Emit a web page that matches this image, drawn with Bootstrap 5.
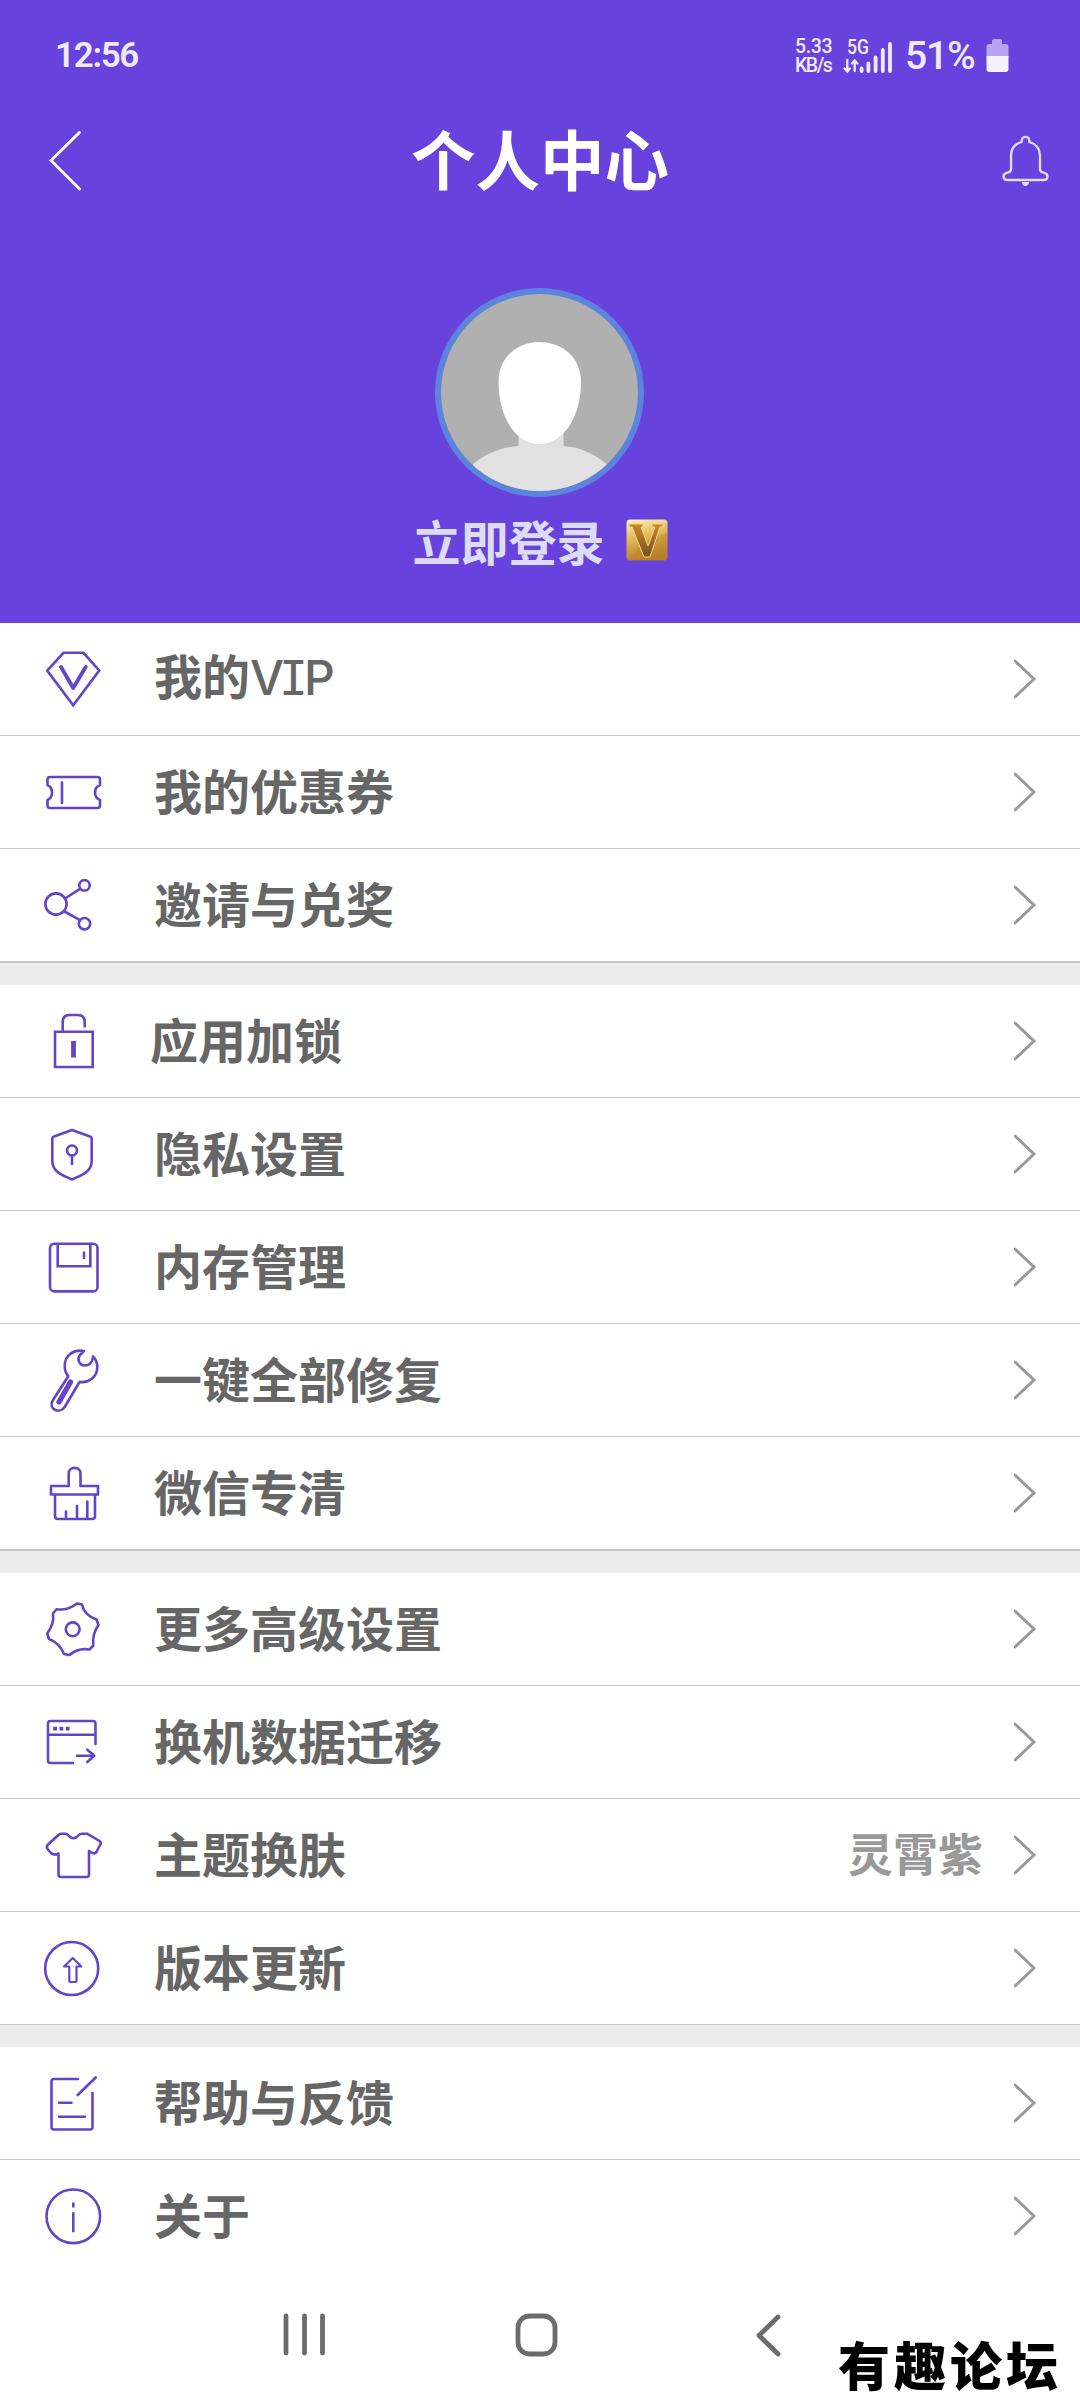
<!DOCTYPE html>
<html lang="zh-CN">
<head>
<meta charset="utf-8">
<meta name="viewport" content="width=device-width, initial-scale=1">
<title>个人中心</title>
<link href="https://cdn.jsdelivr.net/npm/bootstrap@5.3.0/dist/css/bootstrap.min.css" rel="stylesheet">
<style>
body{font-family:"Noto Sans CJK SC",sans-serif;background:#fff;color:#666;width:1080px;height:2400px;overflow:hidden}
svg{display:block;flex:none}
.hero{background:#6742dd;height:623px}
.status-bar{height:110px;padding:0 71px 0 55px;color:#f1eaff;font-family:Roboto,sans-serif}
.clock{font-size:35px;font-weight:600;letter-spacing:-1.3px;line-height:1;padding-top:38px}
.net{font-size:19.5px;font-weight:500;line-height:19px;width:48px;padding-top:37px;letter-spacing:-.4px}
.net-unit{letter-spacing:-1.5px}
.pct{font-size:39px;font-weight:500;line-height:1;padding-top:37px;width:81px;margin-left:12px;letter-spacing:-1.2px}
.title-bar{height:100px}
.page-title{font-size:64.5px;font-weight:700;line-height:94px;margin-bottom:6px;color:#fff}
.avatar{margin-top:78px;padding-right:1px}
.login{font-size:48px;font-weight:700;line-height:60px;color:#dcdcf8;margin-top:13px}
.vip-badge{margin-left:21px}
.item{height:113px;border:0;border-bottom:1px solid #c8c8c8!important;border-radius:0;padding:0;background:#fff;color:#666}
.item-name{font-size:48px;font-weight:700;line-height:106px;padding-left:44px;margin-bottom:6px}
.item-name.shifted{padding-left:40px}
.latin{font-family:Inter,sans-serif;font-weight:500;font-size:48px;letter-spacing:-2px}
.latin-i{font-family:"DejaVu Sans Mono",monospace;font-weight:400;font-size:48px;letter-spacing:-4px;margin-left:-3px}
.item-note{font-size:45px;font-weight:700;line-height:106px;margin-bottom:4px;color:#999;margin-right:31px}
.ico{fill:none;stroke:#6345c8;stroke-width:2.6;stroke-linejoin:round;stroke-linecap:round}
.chev{fill:none;stroke:#999;stroke-width:3;stroke-linecap:round;margin-right:42px}
.gap-band{height:22px;background:#ebebeb}
.gap-band.ruled{height:23px;border-top:1px solid #c8c8c8}
.last-group .item:last-child{border-bottom-color:#fff!important}
.sys-nav{height:127px}
.stamp{right:18px;bottom:4px;font-size:52px;font-weight:900;line-height:64px;letter-spacing:4px;color:#000}
</style>
<script src="https://cdn.jsdelivr.net/npm/bootstrap@5.3.0/dist/js/bootstrap.bundle.min.js"></script>
</head>
<body class="position-relative">
<header class="hero d-flex flex-column">
  <div class="status-bar d-flex justify-content-between align-items-start">
    <div class="clock">12:56</div>
    <div class="d-flex align-items-start">
      <div class="net">5.33<br><span class="net-unit">KB/s</span></div>
      <svg width="50" height="80" viewBox="843 0 50 80" fill="none" stroke="#f1eaff" stroke-linecap="round">
        <text x="847" y="53.5" font-size="20" font-weight="500" fill="#f1eaff" stroke="none" textLength="22" lengthAdjust="spacingAndGlyphs">5G</text>
        <path stroke-width="2.300" d="M847.300 60V71M844.600 68.500l2.700 3 2.700-3M854.700 71V61M852 63.500l2.700-3 2.700 3"/>
        <path stroke-width="3.800" d="M861.600 68.500V71M868.400 63.500V71M875.600 57.500V71M882.800 50V71M890 44V71"/>
      </svg>
      <div class="pct">51%</div>
      <svg width="23" height="80" viewBox="971.500 0 23 80">
        <path fill="#b7a3f0" d="M977.500 41q0-2 2-2h6q2 0 2 2v3h4q2.500 0 2.500 2.500V57h-22V46.500q0-2.500 2.500-2.500h3z"/>
        <path fill="#f6f0ff" d="M972 56h22v13q0 3-3 3h-16q-3 0-3-3z"/>
      </svg>
    </div>
  </div>
  <div class="title-bar d-flex justify-content-between align-items-center">
    <svg width="110" height="100" viewBox="0 110 110 100"><path d="M79.500 132.500L51 160.500l28.500 28.500" fill="none" stroke="#fff" stroke-width="2.900" stroke-linecap="round"/></svg>
    <h1 class="page-title">个人中心</h1>
    <svg width="110" height="100" viewBox="970 110 110 100"><g transform="translate(-17.300 0) scale(1.033 1)"><path d="M1005.800 142q-.3-5.200 3.700-5.200t3.700 5.200c7 2 10.300 7 10.300 13.500v13.500q0 3 3.500 3.700c5.500 1.200 4.500 7.300 0 7.300h-35c-4.500 0-5.500-6.100 0-7.300q3.500-.7 3.500-3.700v-13.500c0-6.500 3.300-11.500 10.300-13.500z" fill="none" stroke="#e3daff" stroke-width="2.300" stroke-linejoin="round"/><path d="M1006 182h7q-.5 4-3.500 4t-3.500-4z" fill="#e3daff"/></g></svg>
  </div>
  <div class="avatar d-flex justify-content-center">
    <svg width="209" height="209" viewBox="435 288 209 209">
      <clipPath id="disc"><circle cx="539.500" cy="392.500" r="98.500"/></clipPath>
      <circle cx="539.500" cy="392.500" r="104.500" fill="#5d84dc"/>
      <g clip-path="url(#disc)">
        <path fill="#b0b0b0" d="M435 288h209v209H435z"/>
        <path fill="#e1e1e1" d="M518.500 425h45v21c17 1 31 8 43 18v40H473v-40c12-10 28-17 45.500-18z"/>
        <path fill="#fff" d="M539.500 342c23 0 41.500 16 41.500 40 0 34-17 62-41.500 62S498.500 416 498.500 382c0-24 18-40 41-40z"/>
      </g>
    </svg>
  </div>
  <div class="login d-flex justify-content-center align-items-center">
    <span>立即登录</span>
    <svg class="vip-badge" width="42" height="42" viewBox="0 0 42 42" aria-label="VIP">
      <defs><linearGradient id="gold" x1="0" y1="0" x2=".25" y2="1"><stop offset="0" stop-color="#fff5c4"/><stop offset=".45" stop-color="#e4bb5d"/><stop offset="1" stop-color="#b67f25"/></linearGradient>
      <linearGradient id="vee" x1="0" y1="0" x2="0" y2="1"><stop offset="0" stop-color="#c98a2a"/><stop offset="1" stop-color="#76501c"/></linearGradient></defs>
      <rect x=".5" y=".5" width="41" height="41" rx="3.500" fill="url(#gold)"/>
      <path d="M41 14v24q0 3-3 3H4q12-22 37-27z" fill="#bb852c" opacity=".38"/>
      <path d="M3 5h14v3h-2l7 19L29 8h-3V5h11v3h-3L24 38h-6L6 8H3z" fill="url(#vee)" stroke="#f2d78b" stroke-width="1"/>
    </svg>
  </div>
</header>

<main>
  <section class="list-group list-group-flush rounded-0">
    <a class="list-group-item item d-flex align-items-center"><svg class="ico" width="110" height="112"><path stroke-linejoin="miter" d="M63.500 29.800H83.500L99.200 47.500 73.200 82.300 47.200 47.500z"/><path stroke-width="3.800" d="M61 44L73.200 65 85.700 44"/></svg><span class="item-name">我的<span class="latin">V</span><span class="latin-i">I</span><span class="latin">P</span></span><svg class="chev ms-auto" width="24" height="112" viewBox="1014 0 24 112"><path d="M1015 38l19 18-19 18"/></svg></a>
    <a class="list-group-item item d-flex align-items-center"><svg class="ico" width="110" height="112"><path d="M50 41H97.500Q100 41 100 43.500V49q-5 2-5 7.500t5 7.500v5.500q0 2.500-2.500 2.500H50q-2.500 0-2.500-2.500V64q4.500-2 4.500-7.500T47.500 49v-5.500Q47.500 41 50 41zM62 46.500V67"/></svg><span class="item-name">我的优惠券</span><svg class="chev ms-auto" width="24" height="112" viewBox="1014 0 24 112"><path d="M1015 38l19 18-19 18"/></svg></a>
    <a class="list-group-item item d-flex align-items-center"><svg class="ico" width="110" height="112"><circle cx="56" cy="55" r="10.600"/><circle cx="84.500" cy="36.300" r="5.200"/><circle cx="84.500" cy="74.700" r="5.700"/><path d="M65 49.500l15-9.700M64.500 62.500L80 71.200"/></svg><span class="item-name">邀请与兑奖</span><svg class="chev ms-auto" width="24" height="112" viewBox="1014 0 24 112"><path d="M1015 38l19 18-19 18"/></svg></a>
  </section>
  <div class="gap-band ruled"></div>
  <section class="list-group list-group-flush rounded-0">
    <a class="list-group-item item d-flex align-items-center"><svg class="ico" width="110" height="112"><path stroke-linejoin="miter" d="M55 46.800h37.700v35.200H55z"/><path d="M62.700 46V37q0-7 7-7h8q7 0 7 7v4.500"/><path stroke-linecap="butt" stroke-width="4.800" d="M73.500 56v16.500"/></svg><span class="item-name shifted">应用加锁</span><svg class="chev ms-auto" width="24" height="112" viewBox="1014 0 24 112"><path d="M1015 38l19 18-19 18"/></svg></a>
    <a class="list-group-item item d-flex align-items-center"><svg class="ico" width="110" height="112"><path d="M72 32l18 6.500q1.700.5 1.700 2V63c0 10-8.700 14-19.700 18.500C61 77 52.300 73 52.300 63V40.500q0-1.500 1.700-2z"/><circle cx="72" cy="52.500" r="5"/><path d="M72 57.500v8.500"/></svg><span class="item-name">隐私设置</span><svg class="chev ms-auto" width="24" height="112" viewBox="1014 0 24 112"><path d="M1015 38l19 18-19 18"/></svg></a>
    <a class="list-group-item item d-flex align-items-center"><svg class="ico" width="110" height="112"><rect x="50" y="32.700" width="47.500" height="47.700" rx="4.500"/><path stroke-linejoin="miter" d="M57.700 33v22.300h32.600V33M84 41.500v5.500"/></svg><span class="item-name">内存管理</span><svg class="chev ms-auto" width="24" height="112" viewBox="1014 0 24 112"><path d="M1015 38l19 18-19 18"/></svg></a>
    <a class="list-group-item item d-flex align-items-center"><svg class="ico" width="110" height="112"><path d="M84 27C74 25 64.700 31 64.700 42c0 4 1.300 7.500 3.600 10.200L52.700 76.500c-5 8.500 7 14 12 6.500L79.500 58C90 59 97.300 52 97.300 43c0-4-1.800-8-4.300-10.500-.5 6-4 9-8 9-6.500 0-8-7-5-10.500z"/><path stroke-width="5.200" d="M70.500 58L59 78"/></svg><span class="item-name">一键全部修复</span><svg class="chev ms-auto" width="24" height="112" viewBox="1014 0 24 112"><path d="M1015 38l19 18-19 18"/></svg></a>
    <a class="list-group-item item d-flex align-items-center"><svg class="ico" width="110" height="112"><path d="M68.700 49V36.500c0-7.500 11.800-7.500 11.800 0V49H98v8.500H51V49zM55 57.500V79q0 3 3 3h34q3 0 3-3V57.500M66 81.500v-7M77 81.500V69M87.300 81.500V64.500"/></svg><span class="item-name">微信专清</span><svg class="chev ms-auto" width="24" height="112" viewBox="1014 0 24 112"><path d="M1015 38l19 18-19 18"/></svg></a>
  </section>
  <div class="gap-band ruled"></div>
  <section class="list-group list-group-flush rounded-0">
    <a class="list-group-item item d-flex align-items-center"><svg class="ico" width="110" height="112"><path d="M77 30.500L82 31.500Q84 42 96.500 46.500L98.500 52Q92 61 93.300 72.500L89.500 76.500Q78 74.500 69.500 82L64 81Q59.500 70 49 66L47.200 60.500Q54.500 51 53 40.500L56.500 36.200Q67.500 38 77 30.500z"/><circle cx="72.700" cy="56.300" r="6.900"/></svg><span class="item-name">更多高级设置</span><svg class="chev ms-auto" width="24" height="112" viewBox="1014 0 24 112"><path d="M1015 38l19 18-19 18"/></svg></a>
    <a class="list-group-item item d-flex align-items-center"><svg class="ico" width="110" height="112"><path d="M73 77H50.500q-2.500 0-2.500-2.500V37.500Q48 35 50.500 35H93q2.500 0 2.500 2.500V58M48 48.700H95.500M77 69.700H94M87.300 63.700l7 6-7 6.300"/><path stroke-width="3.800" stroke-linecap="butt" d="M53.200 42.700h3.800M59.500 42.700h3.800M65.800 42.700h3.800"/></svg><span class="item-name">换机数据迁移</span><svg class="chev ms-auto" width="24" height="112" viewBox="1014 0 24 112"><path d="M1015 38l19 18-19 18"/></svg></a>
    <a class="list-group-item item d-flex align-items-center"><svg class="ico" width="110" height="112"><path d="M61 34.700H65.500Q67 34.700 68 36 73.300 42.500 79 36q1-1.300 2.500-1.300H87L99.500 42q1.800 1.200 1 3l-3.800 7.500c-1.700 3-4.500 2-7.700-.5V75.500q0 2.500-2.500 2.500H61q-2.500 0-2.500-2.500V54.500c-3 1.500-5.700 1.200-7.500-.5l-3.500-4q-1.500-2.500.5-4.500L59 35.500q1-.8 2-.8z"/></svg><span class="item-name">主题换肤</span><span class="item-note ms-auto">灵霄紫</span><svg class="chev" width="24" height="112" viewBox="1014 0 24 112"><path d="M1015 38l19 18-19 18"/></svg></a>
    <a class="list-group-item item d-flex align-items-center"><svg class="ico" width="110" height="112"><circle cx="71.700" cy="56.500" r="26.500"/><path stroke-width="2.200" d="M72.700 46l8.600 8.500h-4.800V69q0 1-1 1h-5.200q-1 0-1-1V54.500h-5.300z"/></svg><span class="item-name">版本更新</span><svg class="chev ms-auto" width="24" height="112" viewBox="1014 0 24 112"><path d="M1015 38l19 18-19 18"/></svg></a>
  </section>
  <div class="gap-band"></div>
  <section class="list-group list-group-flush rounded-0 last-group">
    <a class="list-group-item item d-flex align-items-center"><svg class="ico" width="110" height="112"><path d="M78 32H54q-2.500 0-2.500 2.500V80q0 2.500 2.500 2.500H90q2.500 0 2.500-2.500V46M95.700 30.500L77.700 48M59 55.700H71.500M59 69.700H85"/></svg><span class="item-name">帮助与反馈</span><svg class="chev ms-auto" width="24" height="112" viewBox="1014 0 24 112"><path d="M1015 38l19 18-19 18"/></svg></a>
    <a class="list-group-item item d-flex align-items-center"><svg class="ico" width="110" height="112"><circle cx="73.300" cy="56.300" r="26.800"/><path stroke-linecap="butt" d="M73.300 42.500v5M73.300 52.300v20"/></svg><span class="item-name">关于</span><svg class="chev ms-auto" width="24" height="112" viewBox="1014 0 24 112"><path d="M1015 38l19 18-19 18"/></svg></a>
  </section>
</main>

<nav class="sys-nav">
  <svg width="1080" height="127" viewBox="0 2273 1080 127" fill="none" stroke="#6c6c6c" stroke-width="4.800" stroke-linecap="round" stroke-linejoin="round">
    <path d="M286 2316v37M304.500 2316v37M322.500 2316v37"/>
    <rect x="518" y="2316" width="37" height="38" rx="11.500"/>
    <path d="M778 2317l-19 18.500 19 18.500"/>
  </svg>
</nav>
<div class="stamp position-absolute">有趣论坛</div>
</body>
</html>
